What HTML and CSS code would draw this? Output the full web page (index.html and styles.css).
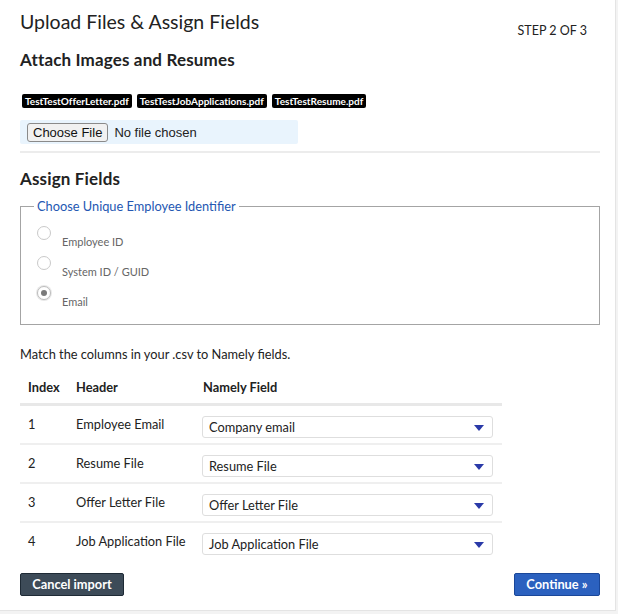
FILE: index.html
```html
<!DOCTYPE html>
<html>
<head>
<meta charset="utf-8">
<link rel="stylesheet" href="styles.css">
</head>
<body>
<div class="card">
  <div class="header">
    <h1 class="title">Upload Files &amp; Assign Fields</h1>
    <div class="step">STEP 2 OF 3</div>
  </div>
  <h2 class="section">Attach Images and Resumes</h2>
  <div class="tags">
    <span class="tag">TestTestOfferLetter.pdf</span>
    <span class="tag">TestTestJobApplications.pdf</span>
    <span class="tag">TestTestResume.pdf</span>
  </div>
  <div class="file-area">
    <span class="file-btn">Choose File</span>
    <span class="file-text">No file chosen</span>
  </div>
  <div class="rule"></div>
  <h2 class="section assign">Assign Fields</h2>
  <fieldset class="ident">
    <legend>Choose Unique Employee Identifier</legend>
    <div class="radio-row"><span class="radio"></span><span class="radio-label">Employee ID</span></div>
    <div class="radio-row"><span class="radio"></span><span class="radio-label">System ID / GUID</span></div>
    <div class="radio-row"><span class="radio checked"></span><span class="radio-label">Email</span></div>
  </fieldset>
  <p class="match">Match the columns in your .csv to Namely fields.</p>
  <table class="map">
    <thead>
      <tr><th class="c-index">Index</th><th class="c-header">Header</th><th>Namely Field</th></tr>
    </thead>
    <tbody>
      <tr><td>1</td><td>Employee Email</td><td class="c-field"><div class="select">Company email<span class="caret"></span></div></td></tr>
      <tr><td>2</td><td>Resume File</td><td class="c-field"><div class="select">Resume File<span class="caret"></span></div></td></tr>
      <tr><td>3</td><td>Offer Letter File</td><td class="c-field"><div class="select">Offer Letter File<span class="caret"></span></div></td></tr>
      <tr class="last"><td>4</td><td>Job Application File</td><td class="c-field"><div class="select">Job Application File<span class="caret"></span></div></td></tr>
    </tbody>
  </table>
  <div class="actions">
    <button class="btn cancel">Cancel import</button>
    <button class="btn continue">Continue »</button>
  </div>
</div>
</body>
</html>
```
FILE: styles.css
```css
html, body {
  margin: 0;
  padding: 0;
}
body {
  background: #f3f3f3;
  font-family: "Lato", "Liberation Sans", sans-serif;
  color: #222;
}
.card {
  box-sizing: border-box;
  width: 616px;
  height: 611px;
  background: #fff;
  border-right: 1px solid #e4e4e4;
  border-bottom: 1px solid #e4e4e4;
  padding: 0 16px 0 20px;
}
.header {
  display: flex;
  justify-content: space-between;
  align-items: flex-start;
}
.title {
  margin: 10px 0 0 0;
  font-size: 19.5px;
  line-height: 24px;
  font-weight: 400;
  color: #222;
}
.step {
  margin: 23px 12px 0 0;
  font-size: 12.5px;
  line-height: 16px;
  color: #222;
}
.section {
  margin: 10px 0 0 0;
  font-size: 17px;
  line-height: 22px;
  font-weight: 700;
  letter-spacing: 0.15px;
  color: #222;
}
.tags {
  display: flex;
  gap: 5px;
  margin: 23px 0 0 2px;
}
.tag {
  background: #000;
  color: #fff;
  font-size: 10px;
  font-weight: 700;
  line-height: 14px;
  padding: 0 3px;
  border-radius: 2px;
  letter-spacing: 0.02px;
}
.file-area {
  display: flex;
  align-items: center;
  width: 278px;
  height: 24px;
  margin-top: 12px;
  box-sizing: border-box;
  padding-left: 7px;
  background: #e9f4fd;
  border-radius: 2px;
  font-family: "Liberation Sans", Arial, sans-serif;
  font-size: 13px;
}
.file-btn {
  box-sizing: border-box;
  height: 19px;
  line-height: 17px;
  padding: 0 5px;
  border: 1px solid #8a8a8a;
  border-radius: 3px;
  background: #f1f1f1;
  color: #111;
}
.file-text {
  margin-left: 6px;
  color: #222;
}
.rule {
  width: 580px;
  height: 2px;
  background: #ececec;
  margin-top: 7px;
}
.assign {
  margin-top: 15px;
}
.ident {
  box-sizing: border-box;
  width: 580px;
  height: 127px;
  margin: 8px 0 0 0;
  padding: 12px 0 0 16px;
  border: 1px solid #a4a4a4;
}
.ident legend {
  color: #2457b2;
  font-size: 12.8px;
  padding: 0 3px;
  margin-left: -3px;
  line-height: 16px;
}
.radio-row {
  display: flex;
  align-items: flex-start;
  height: 30px;
}
.radio {
  box-sizing: border-box;
  width: 14px;
  height: 14px;
  border: 1px solid #c9c9c9;
  border-radius: 50%;
  background: #fff;
  position: relative;
  flex: none;
}
.radio.checked {
  border-color: #bdbdbd;
  box-shadow: 0 0 0 1px #e8e8e8;
}
.radio.checked::after {
  content: "";
  position: absolute;
  left: 3px;
  top: 3px;
  width: 6px;
  height: 6px;
  border-radius: 50%;
  background: #7a7a7a;
}
.radio-label {
  margin: 9px 0 0 11px;
  font-size: 11px;
  line-height: 14px;
  color: #666;
}
.match {
  margin: 21px 0 0 0;
  font-size: 12.8px;
  line-height: 16px;
  color: #222;
}
.map {
  border-collapse: collapse;
  width: 482px;
  margin-top: 17px;
  font-size: 12.8px;
}
.map th {
  text-align: left;
  font-weight: 700;
  padding: 0 8px 8px 8px;
  line-height: 16px;
  border-bottom: 3px solid #e8e8e8;
}
.map th.c-index { width: 32px; }
.map th.c-header { width: 111px; }
.map td {
  vertical-align: top;
  padding: 10px 8px 5px 8px;
  line-height: 16px;
  border-bottom: 2px solid #efefef;
}
.map td.c-field {
  padding: 10px 8px 5px 7px;
}
.map tr.last td { border-bottom: none; }
.select {
  box-sizing: border-box;
  position: relative;
  width: 291px;
  height: 22px;
  padding: 3px 6px;
  border: 1px solid #dedede;
  border-radius: 3px;
  background: #fff;
  font-size: 12.8px;
  line-height: 15px;
  color: #222;
}
.caret {
  position: absolute;
  right: 8px;
  top: 8px;
  width: 0;
  height: 0;
  border-left: 5px solid transparent;
  border-right: 5px solid transparent;
  border-top: 6px solid #2a3aa8;
}
.actions {
  display: flex;
  justify-content: space-between;
  margin-top: 13px;
  width: 580px;
}
.btn {
  box-sizing: border-box;
  height: 23px;
  font-family: "Lato", "Liberation Sans", sans-serif;
  font-size: 12.8px;
  font-weight: 700;
  color: #fff;
  border-radius: 2px;
  padding: 0 10px;
  line-height: 21px;
}
.cancel {
  width: 104px;
  background: #3d4b58;
  border: 1px solid #1e2a35;
}
.continue {
  width: 86px;
  background: #2b61bf;
  border: 1px solid #1a4799;
}
```
